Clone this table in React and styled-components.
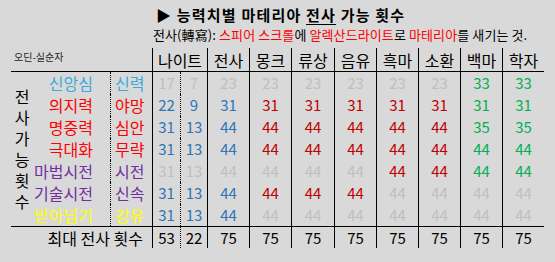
import styled, { createGlobalStyle } from "styled-components";

const GlobalStyle = createGlobalStyle`
  html, body {
    margin: 0;
    padding: 0;
    background: #d9d9d9;
  }
  body {
    font-family: "Noto Sans CJK KR", "Noto Sans", sans-serif;
    color: #000;
  }
`;

const Sheet = styled.div`
  width: 555px;
  height: 262px;
  overflow: hidden;
  background: #d9d9d9;
`;

const Title = styled.h1`
  margin: 0;
  padding: 5px 0 0 156px;
  height: 25px;
  box-sizing: border-box;
  font-size: 15px;
  font-weight: 700;
  line-height: 19px;
  letter-spacing: 1.2px;
  u {
    text-decoration-thickness: 1px;
    text-underline-offset: 3px;
  }
`;

const Subtitle = styled.p`
  margin: 0;
  padding-left: 153px;
  height: 23px;
  font-size: 13px;
  line-height: 20px;
  letter-spacing: 0.1px;
  color: #000;
  em {
    font-style: normal;
    color: #ff0000;
  }
`;

const Table = styled.div`
  margin-left: 11px;
  display: grid;
  grid-template-columns: 22px 77px 42px 28px 27px 42px 42px 43px 42px 42px 42px 42px 42px;
  grid-template-rows: 24px repeat(7, 22px) 22px;
`;

const Cell = styled.div`
  box-sizing: border-box;
  display: flex;
  align-items: center;
  justify-content: center;
  font-size: 15px;
  line-height: 18px;
  white-space: nowrap;
`;

const Corner = styled(Cell)`
  grid-column: 1 / 4;
  justify-content: flex-start;
  padding: 0 0 6px 3px;
  font-size: 10px;
  color: #222;
  border-bottom: 1px solid #000;
`;

const Head = styled(Cell)`
  grid-column: ${(p) => (p.$wide ? "span 2" : "span 1")};
  font-size: 16px;
  border-left: 1px solid #000;
  border-bottom: 1px solid #000;
`;

const SideLabel = styled(Cell)`
  grid-column: 1;
  grid-row: 2 / 9;
  font-size: 16px;
  line-height: 21px;
  width: 22px;
  white-space: normal;
  word-break: break-all;
  text-align: center;
`;

const tones = {
  sky: "#3ba9de",
  red: "#ff0000",
  purple: "#7030a0",
  yellow: "#ffff00",
};

const Stat = styled(Cell)`
  justify-content: flex-end;
  padding-right: 17px;
  font-size: 16px;
  color: ${(p) => tones[p.$tone]};
`;

const SubStat = styled(Cell)`
  justify-content: flex-start;
  padding-left: 4px;
  font-size: 16px;
  border-left: 1px dotted #000;
  color: ${(p) => tones[p.$tone]};
`;

const numColors = {
  g: "#bfbfbf",
  b: "#2e75b6",
  r: "#c00000",
  n: "#00b050",
};

const Num = styled(Cell)`
  color: ${(p) => numColors[p.$c] || "#000"};
  border-left: 1px ${(p) => (p.$dotted ? "dotted" : "solid")} #000;
  border-top: ${(p) => (p.$total ? "1px solid #000" : "none")};
`;

const TotalLabel = styled(Cell)`
  grid-column: 1 / 4;
  justify-content: flex-end;
  padding-right: 9px;
  font-size: 16px;
  border-top: 1px solid #000;
`;

const jobs = ["전사", "몽크", "류상", "음유", "흑마", "소환", "백마", "학자"];

const rows = [
  { name: "신앙심", sub: "신력", tone: "sky", vals: [17, 7, 23, 23, 23, 23, 23, 23, 33, 33], colors: "ggggggggnn" },
  { name: "의지력", sub: "야망", tone: "red", vals: [22, 9, 31, 31, 31, 31, 31, 31, 31, 31], colors: "bbbrrrrrnn" },
  { name: "명중력", sub: "심안", tone: "red", vals: [31, 13, 44, 44, 44, 44, 44, 44, 35, 35], colors: "bbbrrrrrnn" },
  { name: "극대화", sub: "무략", tone: "red", vals: [31, 13, 44, 44, 44, 44, 44, 44, 44, 44], colors: "bbbrrrrrnn" },
  { name: "마법시전", sub: "시전", tone: "purple", vals: [31, 13, 44, 44, 44, 44, 44, 44, 44, 44], colors: "ggggggrrnn" },
  { name: "기술시전", sub: "신속", tone: "purple", vals: [31, 13, 44, 44, 44, 44, 44, 44, 44, 44], colors: "bbbrrrgggg" },
  { name: "받아넘기", sub: "강유", tone: "yellow", vals: [31, 13, 44, 44, 44, 44, 44, 44, 44, 44], colors: "bbbggggggg" },
];

const totals = [53, 22, 75, 75, 75, 75, 75, 75, 75, 75];

export default function App() {
  return (
    <Sheet>
      <GlobalStyle />
      <Title>
        ▶ 능력치별 마테리아 <u>전사</u> 가능 횟수
      </Title>
      <Subtitle>
        전사(轉寫): <em>스피어 스크롤</em>에 <em>알렉산드라이트</em>로 <em>마테리아</em>를 새기는 것.
      </Subtitle>
      <Table>
        <Corner>오딘-실순자</Corner>
        <Head $wide>나이트</Head>
        {jobs.map((job) => (
          <Head key={job}>{job}</Head>
        ))}
        <SideLabel>전사가능횟수</SideLabel>
        {rows.map((row) => (
          <Row key={row.name} row={row} />
        ))}
        <TotalLabel>최대 전사 횟수</TotalLabel>
        {totals.map((v, i) => (
          <Num key={i} $total $dotted={i === 1}>
            {v}
          </Num>
        ))}
      </Table>
    </Sheet>
  );
}

function Row({ row }) {
  return (
    <>
      <Stat $tone={row.tone}>{row.name}</Stat>
      <SubStat $tone={row.tone}>{row.sub}</SubStat>
      {row.vals.map((v, i) => (
        <Num key={i} $c={row.colors[i]} $dotted={i === 1}>
          {v}
        </Num>
      ))}
    </>
  );
}
